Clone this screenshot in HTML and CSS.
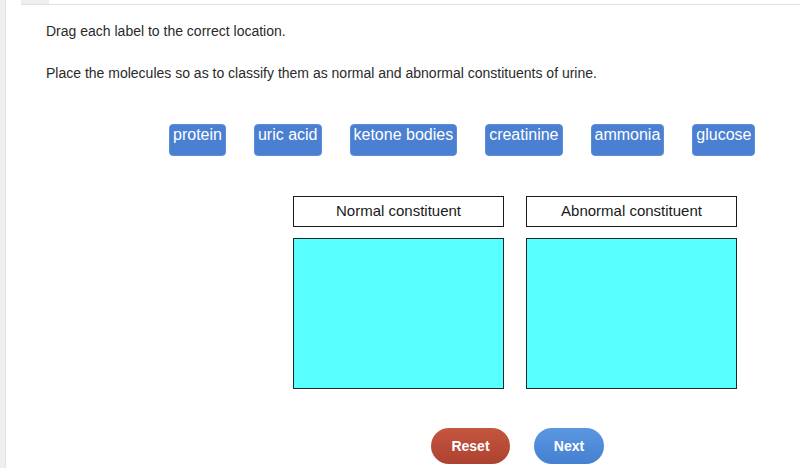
FILE: index.html
```html
<!DOCTYPE html>
<html>
<head>
<meta charset="utf-8">
<link rel="stylesheet" href="styles.css">
</head>
<body>
<div class="page">
  <div class="side"></div>
  <div class="main">
    <div class="topbar"><div class="tab"></div></div>
    <p class="instr first">Drag each label to the correct location.</p>
    <p class="instr second">Place the molecules so as to classify them as normal and abnormal constituents of urine.</p>
    <div class="labels">
      <span class="label">protein</span>
      <span class="label">uric acid</span>
      <span class="label">ketone bodies</span>
      <span class="label">creatinine</span>
      <span class="label">ammonia</span>
      <span class="label">glucose</span>
    </div>
    <div class="targets">
      <div class="col">
        <div class="head">Normal constituent</div>
        <div class="zone"></div>
      </div>
      <div class="col">
        <div class="head">Abnormal constituent</div>
        <div class="zone"></div>
      </div>
    </div>
    <div class="buttons">
      <button class="btn reset">Reset</button>
      <button class="btn next">Next</button>
    </div>
  </div>
</div>
</body>
</html>
```
FILE: styles.css
```css
html, body {
  margin: 0;
  padding: 0;
  background: #fff;
  font-family: "Liberation Sans", Arial, sans-serif;
}
.page {
  display: flex;
  height: 468px;
  overflow: hidden;
}
.side {
  width: 5px;
  background: #eef0ef;
  border-right: 1px solid #e2e4e3;
  flex: none;
}
.main {
  flex: 1;
  display: flex;
  flex-direction: column;
}
.topbar {
  margin-left: 15px;
  height: 4px;
  border-bottom: 1px solid #e3e3e3;
  display: flex;
}
.tab {
  width: 28px;
  height: 4px;
  background: #efefef;
}
.instr {
  margin: 0;
  padding-left: 40px;
  font-size: 14px;
  line-height: 16px;
  color: #2a2a2a;
}
.first { margin-top: 18px; }
.second { margin-top: 26px; }
.labels {
  display: flex;
  margin-top: 43px;
  margin-left: 163px;
  gap: 28px;
}
.label {
  display: inline-block;
  height: 32px;
  box-sizing: border-box;
  padding: 1px 3px 0;
  background: #4a7fd1;
  border: 1px solid #5d8fd8;
  border-radius: 4px;
  color: #fff;
  font-size: 16px;
  line-height: 18px;
}
.targets {
  display: flex;
  gap: 22px;
  margin-top: 40px;
  margin-left: 287px;
}
.col {
  width: 211px;
  display: flex;
  flex-direction: column;
}
.head {
  height: 31px;
  box-sizing: border-box;
  border: 1px solid #1a1a1a;
  text-align: center;
  font-size: 15px;
  line-height: 27px;
  color: #1a1a1a;
}
.zone {
  margin-top: 11px;
  height: 151px;
  box-sizing: border-box;
  background: #58ffff;
  border: 1px solid #1b2a2a;
}
.buttons {
  display: flex;
  gap: 24px;
  margin-top: 39px;
  margin-left: 425px;
}
.btn {
  height: 36px;
  border: none;
  border-radius: 18px;
  color: #fff;
  font-family: "Liberation Sans", Arial, sans-serif;
  font-weight: bold;
  font-size: 14px;
  padding: 0;
}
.reset {
  width: 79px;
  background: linear-gradient(#c4563f, #ad4230);
}
.next {
  width: 70px;
  background: linear-gradient(#5b97e0, #4580d2);
}
```
